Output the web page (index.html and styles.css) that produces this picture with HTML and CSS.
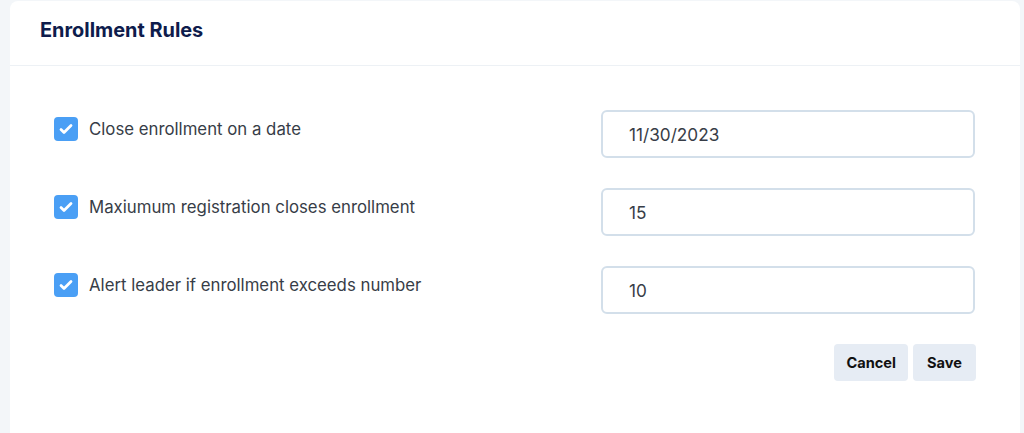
FILE: index.html
```html
<!DOCTYPE html>
<html>
<head>
<meta charset="utf-8">
<link rel="stylesheet" href="styles.css">
</head>
<body>
<div class="card">
  <div class="card-header">
    <h2 class="title">Enrollment Rules</h2>
  </div>
  <div class="card-body">
    <div class="rule">
      <label class="rule-label">
        <span class="check"><svg viewBox="0 0 24 24" width="24" height="24"><path d="M7 12.6l3 2.9L17 8.6" fill="none" stroke="#fff" stroke-width="2.8" stroke-linecap="round" stroke-linejoin="round"/></svg></span>
        <span class="rule-text">Close enrollment on a date</span>
      </label>
      <input class="field" type="text" value="11/30/2023">
    </div>
    <div class="rule">
      <label class="rule-label">
        <span class="check"><svg viewBox="0 0 24 24" width="24" height="24"><path d="M7 12.6l3 2.9L17 8.6" fill="none" stroke="#fff" stroke-width="2.8" stroke-linecap="round" stroke-linejoin="round"/></svg></span>
        <span class="rule-text">Maxiumum registration closes enrollment</span>
      </label>
      <input class="field" type="text" value="15">
    </div>
    <div class="rule">
      <label class="rule-label">
        <span class="check"><svg viewBox="0 0 24 24" width="24" height="24"><path d="M7 12.6l3 2.9L17 8.6" fill="none" stroke="#fff" stroke-width="2.8" stroke-linecap="round" stroke-linejoin="round"/></svg></span>
        <span class="rule-text">Alert leader if enrollment exceeds number</span>
      </label>
      <input class="field" type="text" value="10">
    </div>
    <div class="actions">
      <button class="btn">Cancel</button>
      <button class="btn">Save</button>
    </div>
  </div>
</div>
</body>
</html>
```
FILE: styles.css
```css
html, body {
  margin: 0;
  padding: 0;
  background: #f3f6f9;
  font-family: Inter, "Noto Sans", sans-serif;
}
body {
  padding: 1px 4px 0 10px;
}
.card {
  background: #fff;
  border-radius: 8px 8px 0 0;
  min-height: 432px;
}
.card-header {
  height: 64px;
  border-bottom: 1px solid #edf1f5;
  padding-left: 30px;
  display: flex;
  align-items: center;
}
.title {
  margin: 0;
  margin-top: -7px;
  font-size: 19.9px;
  font-weight: 700;
  color: #0e1c4c;
}
.card-body {
  padding: 44px 45px 0 44px;
  display: flex;
  flex-direction: column;
  gap: 30px;
}
.rule {
  display: flex;
  justify-content: space-between;
  align-items: flex-start;
}
.rule-label {
  display: flex;
  align-items: center;
  gap: 11px;
  margin-top: 7px;
}
.check {
  width: 24px;
  height: 24px;
  border-radius: 4px;
  background: #4a9ff5;
  display: flex;
  align-items: center;
  justify-content: center;
}
.rule-text {
  font-size: 16.8px;
  color: #373d47;
  margin-top: -1px;
}
.field {
  box-sizing: border-box;
  width: 374px;
  height: 48px;
  border: 2px solid #d3dfea;
  border-radius: 6px;
  padding: 0 26px;
  font-family: inherit;
  font-size: 17.2px;
  color: #373d47;
  outline: none;
}
.actions {
  display: flex;
  justify-content: flex-end;
  gap: 5px;
  margin-right: -1px;
}
.btn {
  height: 37px;
  min-width: 63px;
  border: none;
  border-radius: 4px;
  background: #e6ecf4;
  font-family: inherit;
  font-size: 14.6px;
  font-weight: 700;
  color: #111;
  padding: 0 12px;
}
```
